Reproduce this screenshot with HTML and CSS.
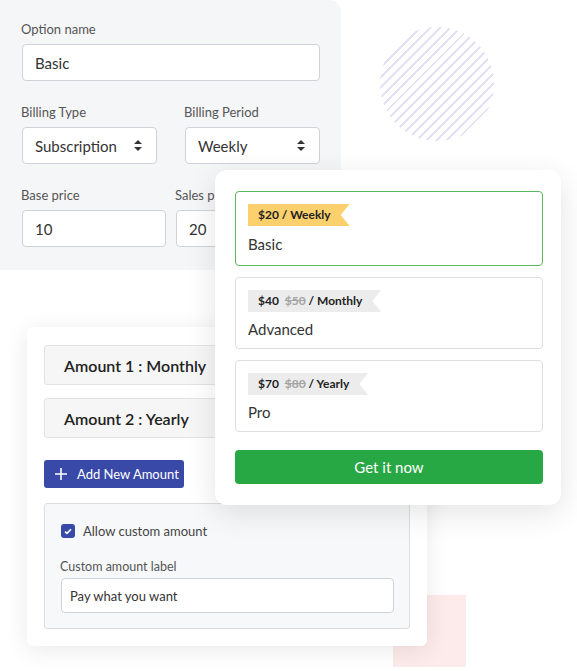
FILE: index.html
```html
<!DOCTYPE html>
<html lang="en">

<head>
    <meta charset="UTF-8">
    <title>Pricing Options</title>
    <link rel="stylesheet" href="styles.css">
</head>

<body>
    <div class="stage">
        <div class="dots"></div>
        <div class="blush"></div>

        <!-- option editor -->
        <form class="editor">
            <div class="row">
                <div class="field">
                    <label>Option name</label>
                    <div class="input">Basic</div>
                </div>
            </div>
            <div class="row two wide-gap">
                <div class="field">
                    <label>Billing Type</label>
                    <div class="input select">Subscription
                        <svg width="8" height="11" viewBox="0 0 8 11"><path d="M4 0L8 4H0Z M4 11L0 7H8Z" fill="#333"/></svg>
                    </div>
                </div>
                <div class="field">
                    <label>Billing Period</label>
                    <div class="input select">Weekly
                        <svg width="8" height="11" viewBox="0 0 8 11"><path d="M4 0L8 4H0Z M4 11L0 7H8Z" fill="#333"/></svg>
                    </div>
                </div>
            </div>
            <div class="row two">
                <div class="field">
                    <label>Base price</label>
                    <div class="input">10</div>
                </div>
                <div class="field">
                    <label>Sales price</label>
                    <div class="input">20</div>
                </div>
            </div>
        </form>

        <!-- amounts -->
        <div class="amounts">
            <div class="amount">Amount 1 : Monthly</div>
            <div class="amount">Amount 2 : Yearly</div>
            <div>
                <button class="add-btn" type="button">
                    <svg width="12" height="12" viewBox="0 0 12 12"><path d="M6 0V12M0 6H12" stroke="#fff" stroke-width="1.6"/></svg>
                    Add New Amount
                </button>
            </div>
            <div class="custom">
                <div class="check-row">
                    <span class="checkbox">
                        <svg width="8" height="7" viewBox="0 0 8 7"><path d="M1 3.6L3 5.4L7 1.2" stroke="#fff" stroke-width="1.6" fill="none"/></svg>
                    </span>
                    Allow custom amount
                </div>
                <div class="field">
                    <label>Custom amount label</label>
                    <div class="input small">Pay what you want</div>
                </div>
            </div>
        </div>

        <!-- pricing preview -->
        <div class="pricing">
            <div class="plan selected">
                <span class="badge gold">$20 / Weekly</span>
                <span class="plan-name">Basic</span>
            </div>
            <div class="plan">
                <span class="badge">$40&nbsp; <s>$50</s> / Monthly</span>
                <span class="plan-name">Advanced</span>
            </div>
            <div class="plan">
                <span class="badge">$70&nbsp; <s>$80</s> / Yearly</span>
                <span class="plan-name">Pro</span>
            </div>
            <button class="buy" type="button">Get it now</button>
        </div>
    </div>
</body>

</html>
```

FILE: styles.css
```css
* {
    box-sizing: border-box;
}

body {
    margin: 0;
    background-color: #fff;
    font-family: Lato, 'Open Sans', sans-serif;
    color: #333;
}

.stage {
    position: relative;
    width: 577px;
    height: 671px;
    overflow: hidden;
}

/* decorations */
.dots {
    position: absolute;
    left: 380px;
    top: 27px;
    width: 114px;
    height: 114px;
    border-radius: 50%;
    background: repeating-linear-gradient(135deg, #e4e1f6 0 2px, transparent 2px 7px);
}

.blush {
    position: absolute;
    left: 393px;
    top: 595px;
    width: 73px;
    height: 72px;
    background-color: #fdeaea;
}

/* editor card */
.editor {
    position: absolute;
    left: 0;
    top: 0;
    width: 341px;
    height: 270px;
    padding: 21px 21px 22px 22px;
    background-color: #f5f6f8;
    border-radius: 0 12px 12px 0;
    display: flex;
    flex-direction: column;
    gap: 23px;
}

.row.two {
    display: grid;
    grid-template-columns: 1fr 1fr;
    gap: 10px;
}

.row.wide-gap {
    gap: 28px;
}

.field {
    display: flex;
    flex-direction: column;
    gap: 7px;
}

label {
    font-size: 13px;
    line-height: 16px;
    color: #555;
    margin-left: -1px;
}

.input {
    height: 37px;
    padding: 0 12px;
    display: flex;
    align-items: center;
    justify-content: space-between;
    font-size: 15px;
    color: #333;
    background-color: #fff;
    border: 1px solid #cfd3d9;
    border-radius: 4px;
}

.input.small {
    height: 35px;
    font-size: 13px;
    padding: 0 8px;
}

.select svg {
    margin-right: 2px;
}

/* amounts card */
.amounts {
    position: absolute;
    left: 27px;
    top: 327px;
    width: 400px;
    padding: 18px 17px 17px;
    background-color: #fff;
    border-radius: 6px;
    box-shadow: 0 4px 24px rgba(0, 0, 0, 0.09);
    display: flex;
    flex-direction: column;
}

.amount {
    height: 40px;
    padding-left: 19px;
    display: flex;
    align-items: center;
    font-size: 16px;
    font-weight: 600;
    color: #222;
    background-color: #f6f6f6;
    border: 1px solid #e3e3e3;
    border-radius: 3px;
    margin-bottom: 13px;
}

.amount + .amount {
    margin-bottom: 22px;
}

.add-btn {
    height: 28px;
    width: 140px;
    padding: 0 0 0 11px;
    display: flex;
    align-items: center;
    gap: 10px;
    font-family: inherit;
    font-size: 13px;
    color: #fff;
    background-color: #3949a8;
    border: none;
    border-radius: 3px;
    margin-bottom: 15px;
}

.custom {
    padding: 19px 15px 15px 16px;
    background-color: #f7f8fa;
    border: 1px solid #dcdde0;
    border-radius: 3px;
    display: flex;
    flex-direction: column;
    gap: 20px;
}

.check-row {
    display: flex;
    align-items: center;
    gap: 8px;
    font-size: 13px;
    line-height: 16px;
    color: #444;
}

.checkbox {
    width: 14px;
    height: 14px;
    border-radius: 3px;
    background-color: #3949a8;
    display: flex;
    align-items: center;
    justify-content: center;
}

.custom .field {
    gap: 3px;
}

.custom label {
    font-size: 12.5px;
}

/* pricing card */
.pricing {
    position: absolute;
    left: 215px;
    top: 170px;
    width: 346px;
    padding: 21px 18px 21px 20px;
    background-color: #fff;
    border-radius: 12px;
    box-shadow: 0 8px 30px rgba(0, 0, 0, 0.11);
    display: flex;
    flex-direction: column;
    gap: 10px;
}

.plan {
    padding: 12px 12px 10px;
    border: 1px solid #dedede;
    border-radius: 4px;
    display: flex;
    flex-direction: column;
    align-items: flex-start;
    gap: 8px;
}

.plan.selected {
    border-color: #5cb85c;
    padding-top: 12px;
    padding-bottom: 12px;
    gap: 9px;
}

.plan + .plan {
    margin-top: 1px;
}

.badge {
    height: 22px;
    line-height: 22px;
    padding: 0 19px 0 10px;
    font-size: 12px;
    font-weight: 700;
    color: #222;
    background-color: #ececec;
    white-space: nowrap;
    clip-path: polygon(0 0, 100% 0, calc(100% - 9px) 50%, 100% 100%, 0 100%);
}

.badge.gold {
    background-color: #fcd06c;
}

.badge s {
    color: #a5a5a5;
}

.plan-name {
    font-size: 15px;
    line-height: 18px;
    color: #333;
}

.buy {
    height: 34px;
    margin-top: 8px;
    font-family: inherit;
    font-size: 15px;
    color: #fff;
    background-color: #28a745;
    border: none;
    border-radius: 4px;
}
```
